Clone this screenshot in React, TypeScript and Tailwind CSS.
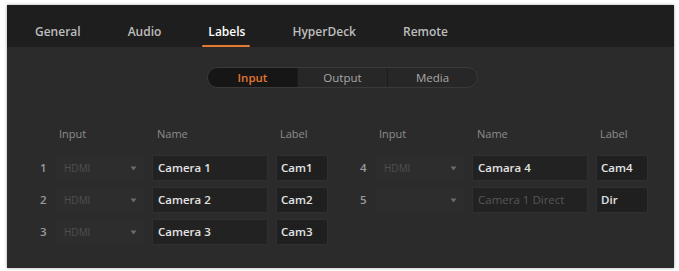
import React from "react";

const tabs = ["General", "Audio", "Labels", "HyperDeck", "Remote"];

type Row = { n: string; src: string; name: string; label: string; placeholder?: boolean };

const left: Row[] = [
  { n: "1", src: "HDMI", name: "Camera 1", label: "Cam1" },
  { n: "2", src: "HDMI", name: "Camera 2", label: "Cam2" },
  { n: "3", src: "HDMI", name: "Camera 3", label: "Cam3" },
];

const right: Row[] = [
  { n: "4", src: "HDMI", name: "Camara 4", label: "Cam4" },
  { n: "5", src: "", name: "Camera 1 Direct", label: "Dir", placeholder: true },
];

function Caret() {
  return (
    <svg width="7" height="5" viewBox="0 0 7 5" className="shrink-0">
      <path d="M0.5 0.5 L6.5 0.5 L3.5 4.5 Z" fill="#6a6a6a" />
    </svg>
  );
}

function LabelGroup({ rows }: { rows: Row[] }) {
  return (
    <div className="flex flex-col">
      <div className="flex h-[14px] items-center text-[11px] text-[#8d8d8d]">
        <span className="w-[16px]" />
        <span className="w-[88px] pl-[3px]">Input</span>
        <span className="ml-[8px] w-[116px] pl-[5px]">Name</span>
        <span className="ml-[8px] w-[52px] pl-[4px]">Label</span>
      </div>
      <div className="mt-[14px] flex flex-col gap-[6px]">
        {rows.map((r) => (
          <div key={r.n} className="flex h-[26px] items-center text-[11.5px]">
            <span className="w-[16px] font-semibold text-[#9a9a9a]">{r.n}</span>
            <div className="flex h-full w-[88px] items-center justify-between rounded-[2px] bg-[#2d2d2d] pl-[8px] pr-[7px]">
              <span className="text-[10px] text-[#4f4f4f]">{r.src}</span>
              <Caret />
            </div>
            <div className="ml-[8px] flex h-full w-[116px] items-center rounded-[2px] border border-[#303030] bg-[#222222] pl-[5px]">
              <span className={r.placeholder ? "text-[#575757]" : "font-semibold text-[#e4e4e4]"}>{r.name}</span>
            </div>
            <div className="ml-[8px] flex h-full w-[52px] items-center rounded-[2px] border border-[#303030] bg-[#1f1f1f] pl-[4px]">
              <span className="font-semibold text-[#e4e4e4]">{r.label}</span>
            </div>
          </div>
        ))}
      </div>
    </div>
  );
}

export default function App() {
  return (
    <div className="h-[271px] w-[679px] bg-white pl-[7px] pt-[5px]" style={{ fontFamily: '"Open Sans", "Noto Sans", sans-serif' }}>
      <div className="flex h-[263px] w-[667px] flex-col bg-[#2b2b2b] shadow-[0_0_3px_rgba(0,0,0,0.35)]">
        <div className="flex h-[42px] items-stretch gap-[47px] bg-[#1e1e1e] pl-[28px]">
          {tabs.map((t) => (
            <div key={t} className="relative flex items-center pt-[17px] pb-[6px]">
              <span className={"text-[12px] font-semibold " + (t === "Labels" ? "text-white" : "text-[#bdbdbd]")}>{t}</span>
              {t === "Labels" && <span className="absolute bottom-[0px] left-[-6px] right-[-5px] h-[2px] rounded-full bg-[#e27a33]" />}
            </div>
          ))}
        </div>

        <div className="mt-[20px] flex justify-center pl-[4px]">
          <div className="flex h-[21px] w-[271px] overflow-hidden rounded-full border border-[#3a3a3a] bg-[#272727] text-[11.5px]">
            <div className="flex flex-1 items-center justify-center bg-[#161616] font-semibold text-[#e2772f]">Input</div>
            <div className="flex flex-1 items-center justify-center border-l border-[#1c1c1c] text-[#a8a8a8]">Output</div>
            <div className="flex flex-1 items-center justify-center border-l border-[#1c1c1c] text-[#a8a8a8]">Media</div>
          </div>
        </div>

        <div className="mt-[39px] flex gap-[32px] pl-[33px]">
          <LabelGroup rows={left} />
          <LabelGroup rows={right} />
        </div>
      </div>
    </div>
  );
}
